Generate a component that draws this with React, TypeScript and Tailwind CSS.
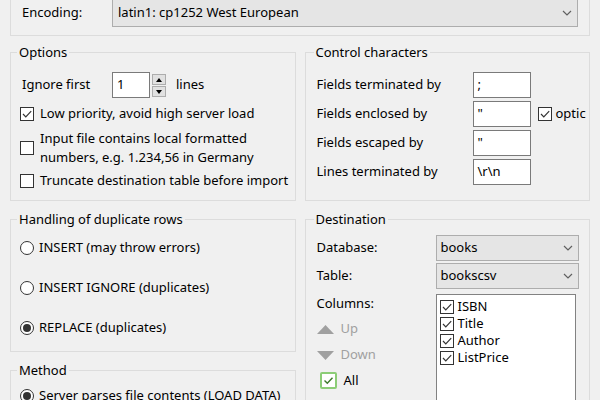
import React from "react";

const font = { fontFamily: '"Noto Sans", "Open Sans", sans-serif' };

function Check({ checked }: { checked?: boolean }) {
  return (
    <span className="w-[14px] h-[14px] border border-[#333333] bg-white flex items-center justify-center shrink-0">
      {checked && (
        <svg width="12" height="12" viewBox="0 0 12 12">
          <path d="M2 6 L4.8 8.8 L10.2 3.2" stroke="#333333" strokeWidth="1.2" fill="none" />
        </svg>
      )}
    </span>
  );
}

function Radio({ checked }: { checked?: boolean }) {
  return (
    <span className="w-[14px] h-[14px] rounded-full border border-[#333333] bg-white flex items-center justify-center shrink-0">
      {checked && <span className="w-[8px] h-[8px] rounded-full bg-[#333333]" />}
    </span>
  );
}

function Chevron() {
  return (
    <svg width="10" height="6" viewBox="0 0 10 6" className="shrink-0">
      <path d="M1 1 L5 5 L9 1" stroke="#606060" strokeWidth="1.2" fill="none" />
    </svg>
  );
}

function Select({ value, className }: { value: string; className: string }) {
  return (
    <div
      className={
        "flex items-center justify-between bg-[#e5e5e5] border border-[#adadad] pl-[4px] pr-[5px] " +
        className
      }
    >
      <span>{value}</span>
      <Chevron />
    </div>
  );
}

function TextBox({ value }: { value: string }) {
  return (
    <div className="w-[58px] h-[26px] border border-[#7a7a7a] bg-white flex items-center pl-[4px] shrink-0">
      {value}
    </div>
  );
}

function Group({
  title,
  className,
  children,
}: {
  title: string;
  className: string;
  children: React.ReactNode;
}) {
  return (
    <fieldset className={"border border-[#dcdcdc] min-w-0 " + className}>
      <legend className="px-[2px] ml-[-3px] leading-[16px]">{title}</legend>
      {children}
    </fieldset>
  );
}

export default function App() {
  return (
    <div
      className="w-[600px] h-[400px] overflow-hidden bg-[#f0f0f0] text-[13px] text-black px-[10px]"
      style={font}
    >
      {/* Encoding */}
      <div className="mt-[-10px] h-[46px] border border-[#dcdcdc] pl-[11px] pr-[11px] pt-[8px] flex">
        <span className="w-[90px] h-[28px] flex items-center">Encoding:</span>
        <Select value="latin1: cp1252 West European" className="flex-1 h-[28px] pl-[5px]" />
      </div>

      <div className="flex gap-[9px] mt-[8px]">
        {/* left column */}
        <div className="w-[286px] flex flex-col gap-[10px]">
          <Group title="Options" className="h-[157px] pl-[9px] pt-[12px]">
            <div className="flex items-center h-[26px]">
              <span className="w-[92px] pl-[2px]">Ignore first</span>
              <div className="w-[38px] h-[26px] border border-[#7a7a7a] bg-white flex items-center pl-[4px]">
                1
              </div>
              <div className="flex flex-col gap-[1px] ml-[2px] mt-[1px]">
                <div className="w-[14px] h-[11px] bg-[#e1e1e1] border border-[#adadad] flex items-center justify-center">
                  <svg width="6" height="4" viewBox="0 0 6 4">
                    <path d="M0 4 L3 0 L6 4 Z" fill="#000" />
                  </svg>
                </div>
                <div className="w-[14px] h-[11px] bg-[#e1e1e1] border border-[#adadad] flex items-center justify-center">
                  <svg width="6" height="4" viewBox="0 0 6 4">
                    <path d="M0 0 L3 4 L6 0 Z" fill="#000" />
                  </svg>
                </div>
              </div>
              <span className="ml-[10px]">lines</span>
            </div>
            <div className="flex items-center gap-[6px] h-[16px] mt-[8px]">
              <Check checked />
              <span className="whitespace-nowrap">Low priority, avoid high server load</span>
            </div>
            <div className="flex items-center gap-[6px] mt-[7px]">
              <Check />
              <span className="leading-[19px] whitespace-nowrap">
                Input file contains local formatted
                <br />
                numbers, e.g. 1.234,56 in Germany
              </span>
            </div>
            <div className="flex items-center gap-[6px] h-[16px] mt-[6px]">
              <Check />
              <span className="whitespace-nowrap">Truncate destination table before import</span>
            </div>
          </Group>

          <Group title="Handling of duplicate rows" className="h-[141px] pl-[9px] pt-[13px]">
            <div className="flex flex-col gap-[24px]">
              <div className="flex items-center gap-[5px] h-[16px]">
                <Radio />
                <span>INSERT (may throw errors)</span>
              </div>
              <div className="flex items-center gap-[5px] h-[16px]">
                <Radio />
                <span>INSERT IGNORE (duplicates)</span>
              </div>
              <div className="flex items-center gap-[5px] h-[16px]">
                <Radio checked />
                <span>REPLACE (duplicates)</span>
              </div>
            </div>
          </Group>

          <Group title="Method" className="h-[80px] pl-[9px] pt-[10px]">
            <div className="flex items-center gap-[5px] h-[16px]">
              <Radio checked />
              <span className="whitespace-nowrap">Server parses file contents (LOAD DATA)</span>
            </div>
          </Group>
        </div>

        {/* right column */}
        <div className="w-[286px] flex flex-col gap-[10px]">
          <Group title="Control characters" className="h-[157px] pl-[11px] pt-[12px]">
            <div className="flex flex-col gap-[3px]">
              <div className="flex items-center">
                <span className="w-[156px]">Fields terminated by</span>
                <TextBox value=";" />
              </div>
              <div className="flex items-center overflow-hidden">
                <span className="w-[156px] shrink-0">Fields enclosed by</span>
                <TextBox value={'"'} />
                <span className="ml-[7px] flex items-center gap-[4px]">
                  <Check checked />
                  <span className="whitespace-nowrap">optic</span>
                </span>
              </div>
              <div className="flex items-center">
                <span className="w-[156px]">Fields escaped by</span>
                <TextBox value={'"'} />
              </div>
              <div className="flex items-center">
                <span className="w-[156px]">Lines terminated by</span>
                <TextBox value="\r\n" />
              </div>
            </div>
          </Group>

          <Group title="Destination" className="h-[200px] pl-[11px] pt-[8px]">
            <div className="flex items-center">
              <span className="w-[119px]">Database:</span>
              <Select value="books" className="w-[143px] h-[26px]" />
            </div>
            <div className="flex items-center mt-[2px]">
              <span className="w-[119px]">Table:</span>
              <Select value="bookscsv" className="w-[143px] h-[26px]" />
            </div>
            <div className="flex mt-[5px]">
              <div className="w-[119px] flex flex-col">
                <span className="mt-[1px] h-[16px] leading-[16px]">Columns:</span>
                <div className="mt-[10px] h-[16px] flex items-center gap-[7px] text-[#a0a0a0]">
                  <svg width="17" height="9" viewBox="0 0 17 9">
                    <path d="M0 9 L8.5 0 L17 9 Z" fill="#a0a0a0" />
                  </svg>
                  <span>Up</span>
                </div>
                <div className="mt-[10px] h-[16px] flex items-center gap-[7px] text-[#a0a0a0]">
                  <svg width="17" height="9" viewBox="0 0 17 9">
                    <path d="M0 0 L8.5 9 L17 0 Z" fill="#a0a0a0" />
                  </svg>
                  <span>Down</span>
                </div>
                <div className="mt-[9px] h-[17px] flex items-center gap-[7px] ml-[3px]">
                  <span className="w-[17px] h-[17px] border-2 border-[#8ccd77] rounded-[2px] bg-white flex items-center justify-center">
                    <svg width="11" height="11" viewBox="0 0 11 11">
                      <path d="M1.5 5.5 L4.3 8.3 L9.5 2.8" stroke="#3d7a2c" strokeWidth="1.4" fill="none" />
                    </svg>
                  </span>
                  <span>All</span>
                </div>
              </div>
              <div className="w-[140px] h-[120px] border border-[#828282] bg-white pt-[3px] pl-[3px]">
                {["ISBN", "Title", "Author", "ListPrice"].map((c) => (
                  <div key={c} className="flex items-center gap-[4px] h-[17px]">
                    <Check checked />
                    <span>{c}</span>
                  </div>
                ))}
              </div>
            </div>
          </Group>
        </div>
      </div>
    </div>
  );
}
